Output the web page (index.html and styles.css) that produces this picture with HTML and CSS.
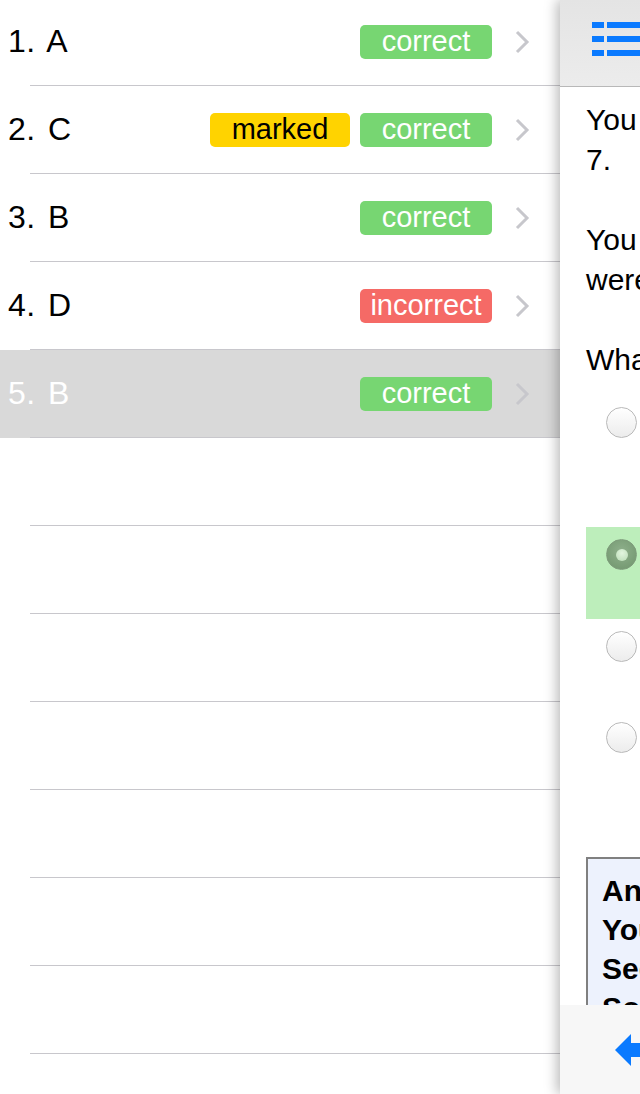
FILE: index.html
```html
<!DOCTYPE html>
<html>
<head>
<meta charset="utf-8">
<link rel="stylesheet" href="styles.css">
</head>
<body>
<div class="app">
  <div class="list">
    <div class="row">
      <span class="label">1. A</span>
      <span class="badges"><span class="badge green">correct</span></span>
      <svg class="chev" width="16" height="24" viewBox="0 0 16 24"><path d="M3 2 L13 12 L3 22" fill="none" stroke="#c7c7cc" stroke-width="3"/></svg>
    </div>
    <div class="row">
      <span class="label">2. C</span>
      <span class="badges"><span class="badge yellow">marked</span><span class="badge green">correct</span></span>
      <svg class="chev" width="16" height="24" viewBox="0 0 16 24"><path d="M3 2 L13 12 L3 22" fill="none" stroke="#c7c7cc" stroke-width="3"/></svg>
    </div>
    <div class="row">
      <span class="label">3. B</span>
      <span class="badges"><span class="badge green">correct</span></span>
      <svg class="chev" width="16" height="24" viewBox="0 0 16 24"><path d="M3 2 L13 12 L3 22" fill="none" stroke="#c7c7cc" stroke-width="3"/></svg>
    </div>
    <div class="row">
      <span class="label">4. D</span>
      <span class="badges"><span class="badge red">incorrect</span></span>
      <svg class="chev" width="16" height="24" viewBox="0 0 16 24"><path d="M3 2 L13 12 L3 22" fill="none" stroke="#c7c7cc" stroke-width="3"/></svg>
    </div>
    <div class="row selected">
      <span class="label">5. B</span>
      <span class="badges"><span class="badge green">correct</span></span>
      <svg class="chev" width="16" height="24" viewBox="0 0 16 24"><path d="M3 2 L13 12 L3 22" fill="none" stroke="#c7c7cc" stroke-width="3"/></svg>
    </div>
    <div class="row"></div>
    <div class="row"></div>
    <div class="row"></div>
    <div class="row"></div>
    <div class="row"></div>
    <div class="row"></div>
    <div class="row"></div>
  </div>
  <div class="detail">
    <div class="header">
      <svg class="menu" width="60" height="36" viewBox="0 0 60 36"><rect x="0" y="0" width="12" height="6" fill="#0a7aff"/><rect x="15" y="0" width="45" height="6" fill="#0a7aff"/><rect x="0" y="14" width="12" height="6" fill="#0a7aff"/><rect x="15" y="14" width="45" height="6" fill="#0a7aff"/><rect x="0" y="28" width="12" height="6" fill="#0a7aff"/><rect x="15" y="28" width="45" height="6" fill="#0a7aff"/></svg>
    </div>
    <div class="content">
      <p>You have answered question 5 of<br>7.</p>
      <p>You answered B. The others<br>were marked.</p>
      <p>What is the answer?</p>
      <div class="options">
        <div class="option o1"><span class="radio"></span><span class="otext">A</span></div>
        <div class="option o2 chosen"><span class="radio on"></span><span class="otext">B</span></div>
        <div class="option o3"><span class="radio"></span><span class="otext">C</span></div>
        <div class="option o4"><span class="radio"></span><span class="otext">D</span></div>
      </div>
      <div class="answer">
        <div>Answer: B</div>
        <div>Your answer: B</div>
        <div>See explanation</div>
        <div>So the answer is B.</div>
      </div>
    </div>
    <div class="toolbar">
      <svg class="back" width="40" height="34" viewBox="0 0 40 34"><path d="M0 17 L16 1 L16 10 L40 10 L40 24 L16 24 L16 33 Z" fill="#0a7aff"/></svg>
    </div>
  </div>
</div>
</body>
</html>
```

FILE: styles.css
```css
html, body {
  margin: 0;
  padding: 0;
  width: 640px;
  height: 1094px;
  overflow: hidden;
  background: #fff;
  font-family: "Liberation Sans", Arial, sans-serif;
}

.app {
  display: flex;
  width: 640px;
  height: 1094px;
  overflow: hidden;
}

.list {
  flex: none;
  width: 560px;
  margin-top: -2px;
}

.row {
  height: 87px;
  border-bottom: 1px solid transparent;
  display: flex;
  align-items: center;
  padding: 0 30px 0 8px;
  position: relative;
  box-sizing: content-box;
  width: 522px;
}

.row::after {
  content: "";
  position: absolute;
  left: 30px;
  right: 0;
  bottom: -1px;
  height: 1px;
  background: #c8c7cc;
}

.row.selected {
  background: #d9d9d9;
}

.label {
  font-size: 32px;
  letter-spacing: 0.5px;
  word-spacing: 3px;
  color: #000;
  flex: 1;
}

.selected .label {
  color: #fff;
}

.badges {
  display: flex;
  gap: 10px;
}

.badge {
  display: inline-flex;
  align-items: center;
  justify-content: center;
  height: 34px;
  border-radius: 5px;
  font-size: 29px;
  color: #fff;
}

.badge.green {
  background: #77d672;
  width: 132px;
}

.badge.red {
  background: #f56a66;
  width: 132px;
}

.badge.yellow {
  background: #ffd300;
  color: #000;
  width: 140px;
}

.chev {
  margin-left: 22px;
  flex: none;
}

.detail {
  flex: none;
  width: 640px;
  position: relative;
  box-shadow: -3px 0 12px rgba(0, 0, 0, 0.28);
  background: #fff;
  display: flex;
  flex-direction: column;
  height: 1094px;
}

.header {
  height: 86px;
  border-bottom: 1px solid #b8b8b8;
  background: linear-gradient(#e4e4e4, #ececec);
  flex: none;
  display: flex;
  align-items: flex-start;
}

.menu {
  margin: 22px 0 0 32px;
}

.content {
  flex: 1;
  padding: 13px 20px 0 26px;
  font-size: 30px;
  line-height: 40px;
  color: #000;
  white-space: nowrap;
  overflow: hidden;
}

.content p {
  margin: 0 0 40px 0;
}

.content p:nth-child(3) {
  margin-bottom: 15px;
}

.options {
  display: flex;
  flex-direction: column;
}

.option {
  display: flex;
  align-items: flex-start;
  padding: 12px 0 0 20px;
  box-sizing: border-box;
}

.option.o1 { height: 132px; }
.option.o2 { height: 92px; }
.option.o3 { height: 91px; }
.option.o4 { height: 91px; }

.option.chosen {
  background: #bdeebb;
}

.otext {
  margin-left: 40px;
}

.radio {
  flex: none;
  width: 29px;
  height: 29px;
  border-radius: 50%;
  border: 1.5px solid #b9b9b9;
  background: linear-gradient(#ffffff, #ececec);
  display: flex;
  align-items: center;
  justify-content: center;
}

.radio.on {
  background: radial-gradient(circle at 50% 40%, #8fb08c, #6f946c);
  border-color: #7f9c7c;
}

.radio.on::after {
  content: "";
  width: 12px;
  height: 12px;
  border-radius: 50%;
  background: radial-gradient(circle at 50% 35%, #e2f5df, #b9dcb5);
}

.answer {
  margin-top: 56px;
  border: 2px solid #808080;
  background: #edf2fd;
  padding: 12px 14px;
  font-weight: bold;
  line-height: 39px;
  height: 300px;
}

.toolbar {
  position: absolute;
  left: 0;
  right: 0;
  bottom: 0;
  height: 89px;
  background: #f7f7f7;
  display: flex;
  align-items: center;
}

.back {
  margin-left: 55px;
}
```
